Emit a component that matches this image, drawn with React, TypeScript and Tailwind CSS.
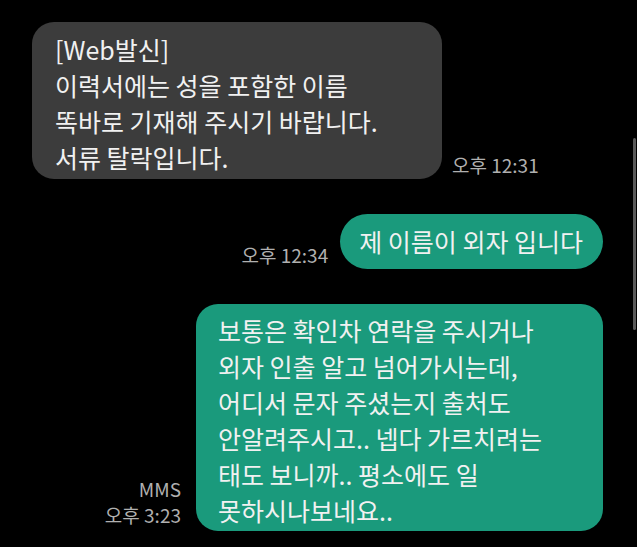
const font = { fontFamily: '"Noto Sans CJK KR", "Noto Sans", sans-serif' };

function Lines({ lines }: { lines: string[] }) {
  return (
    <>
      {lines.map((l) => (
        <div key={l} className="whitespace-pre">
          {l}
        </div>
      ))}
    </>
  );
}

export default function App() {
  return (
    <div
      className="relative w-[637px] h-[547px] bg-black overflow-hidden text-[#f1f1f1]"
      style={font}
    >
      {/* scroll indicator */}
      <div className="absolute right-[1px] top-[138px] h-[192px] w-[3px] rounded-full bg-[#5a5a5a]" />

      <div className="flex flex-col pt-[22px]">
        {/* received */}
        <div className="flex items-end gap-[10px] pl-[32px]">
          <div className="w-[410px] rounded-[22px] bg-[#3c3c3c] pl-[23px] pt-[9px] pb-[4px] text-[25px] leading-[36px]">
            <Lines
              lines={[
                "[Web발신]",
                "이력서에는 성을 포함한 이름",
                "똑바로 기재해 주시기 바랍니다.",
                "서류 탈락입니다.",
              ]}
            />
          </div>
          <span className="mb-[3px] text-[19px] leading-[22px] text-[#b0b0b0]">
            오후 12:31
          </span>
        </div>

        {/* sent 1 */}
        <div className="mt-[35px] flex items-end justify-end gap-[12px] pr-[34px]">
          <span className="mb-[3px] text-[19px] leading-[22px] text-[#b0b0b0]">
            오후 12:34
          </span>
          <div className="h-[55px] flex items-center rounded-full bg-[#1a9a7c] pl-[19px] pr-[20px] text-[25px]">
            제 이름이 외자 입니다
          </div>
        </div>

        {/* sent 2 */}
        <div className="mt-[35px] flex items-end justify-end gap-[15px] pr-[34px]">
          <div className="mb-[3px] flex flex-col items-end text-[19px] leading-[26px] text-[#b0b0b0]">
            <span>MMS</span>
            <span>오후 3:23</span>
          </div>
          <div className="w-[407px] rounded-[22px] bg-[#1a9a7c] pl-[22px] pt-[8px] pb-[3px] text-[25px] leading-[36px]">
            <Lines
              lines={[
                "보통은 확인차 연락을 주시거나",
                "외자 인출 알고 넘어가시는데,",
                "어디서 문자 주셨는지 출처도",
                "안알려주시고.. 넵다 가르치려는",
                "태도 보니까.. 평소에도 일",
                "못하시나보네요..",
              ]}
            />
          </div>
        </div>
      </div>
    </div>
  );
}
